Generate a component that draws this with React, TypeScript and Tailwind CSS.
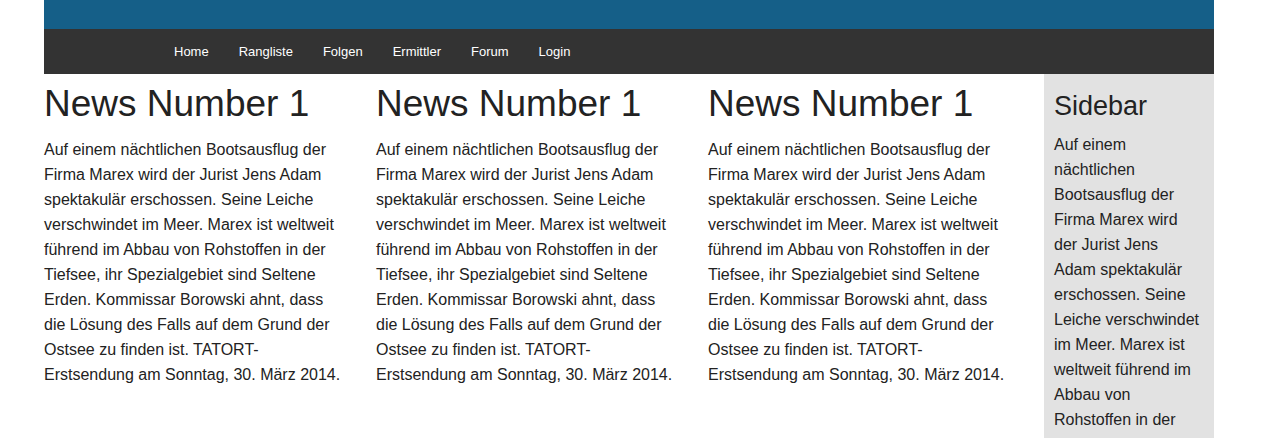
import React from "react";

const TEXT =
  "Auf einem nächtlichen Bootsausflug der Firma Marex wird der Jurist Jens Adam spektakulär erschossen. Seine Leiche verschwindet im Meer. Marex ist weltweit führend im Abbau von Rohstoffen in der Tiefsee, ihr Spezialgebiet sind Seltene Erden. Kommissar Borowski ahnt, dass die Lösung des Falls auf dem Grund der Ostsee zu finden ist. TATORT-Erstsendung am Sonntag, 30. März 2014.";

const NAV = ["Home", "Rangliste", "Folgen", "Ermittler", "Forum", "Login"];

function News() {
  return (
    <div className="w-[332px] shrink-0 pr-[32px]">
      <h2 className="mt-[10px] mb-[13px] whitespace-nowrap text-[37px] leading-[40px] font-normal text-[#222]">
        News Number 1
      </h2>
      <p className="text-[16px] leading-[25px] text-[#222]">{TEXT}</p>
    </div>
  );
}

export default function App() {
  return (
    <div
      className="min-h-[438px] bg-white"
      style={{ fontFamily: '"Liberation Sans", Arial, Helvetica, sans-serif' }}
    >
      <div className="w-[1170px] ml-[44px]">
        <div className="h-[29px] bg-[#155f88]" />
        <nav className="flex h-[45px] items-center bg-[#333333] pl-[115px]">
          {NAV.map((n) => (
            <a key={n} className="px-[15px] text-[13px] leading-[18px] text-white">
              {n}
            </a>
          ))}
        </nav>
        <div className="flex">
          <News />
          <News />
          <News />
          <aside className="ml-[4px] w-[170px] shrink-0 bg-[#e2e2e2] pl-[10px] pr-[13px] pt-[17px] pb-[20px]">
            <h3 className="mb-[11px] text-[27px] leading-[30px] font-normal text-[#222]">Sidebar</h3>
            <p className="text-[16px] leading-[25px] text-[#222]">{TEXT}</p>
          </aside>
        </div>
      </div>
    </div>
  );
}
